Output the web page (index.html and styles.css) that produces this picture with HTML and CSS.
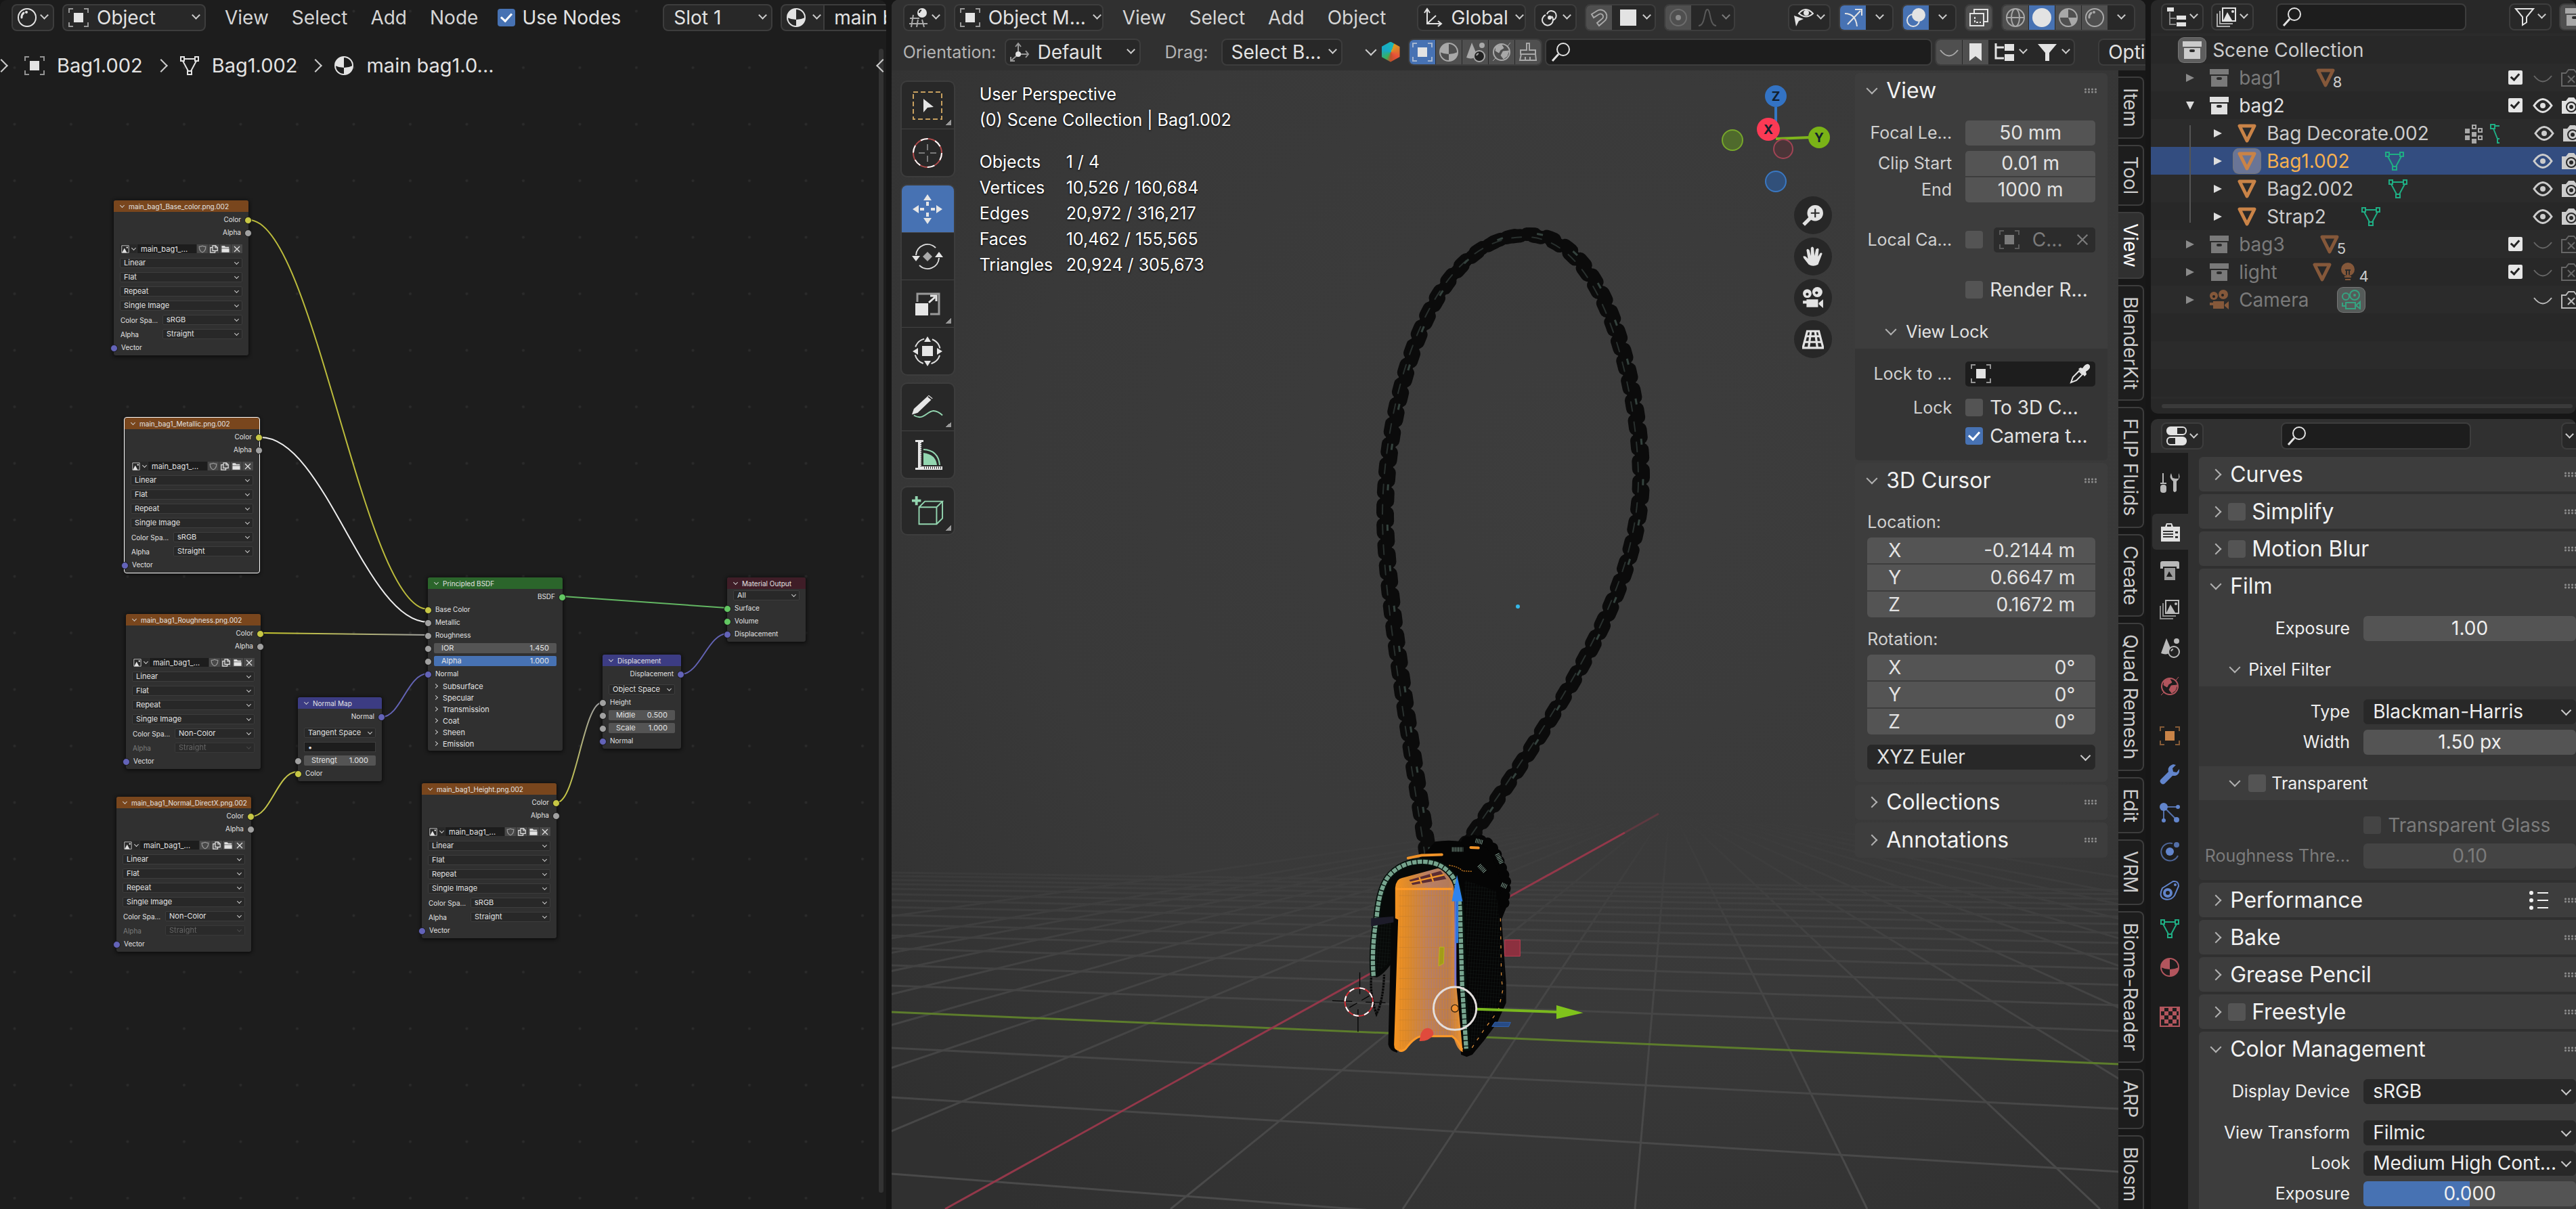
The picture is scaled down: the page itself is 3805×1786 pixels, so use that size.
FILE: index.html
```html
<!DOCTYPE html>
<html lang="en">
<head>
<meta charset="utf-8">
<title>Shading workspace</title>
<link rel="stylesheet" href="styles.css">
</head>
<body>
<svg class="sprite" aria-hidden="true">
  <symbol id="i-object" viewBox="0 0 30 30"><path d="M8 8h14v14H8z" fill="currentColor"/><path d="M1 8V2h6M23 2h6v6M29 22v6h-6M7 28H1v-6" fill="none" stroke="currentColor" stroke-width="2" opacity=".6"/></symbol>
  <symbol id="i-material" viewBox="0 0 30 30"><circle cx="15" cy="15" r="13" fill="none" stroke="currentColor" stroke-width="2"/><path d="M15 2a13 13 0 0 0-13 13q6 3 13 3zM15 18q7 0 13-3a13 13 0 0 1-13 13z" fill="currentColor"/></symbol>
  <symbol id="i-mesh" viewBox="0 0 30 30"><path d="M7 5h16M5 8l8 15M25 8l-8 15M2 2h5v6H2zM23 2h5v6h-5zM12 23h6v5h-6z" fill="none" stroke="currentColor" stroke-width="2"/></symbol>
  <symbol id="i-tri" viewBox="0 0 30 30"><path d="M4 4h22L15 26z" fill="none" stroke="currentColor" stroke-width="5" stroke-linejoin="round"/></symbol>
  <symbol id="i-sphere" viewBox="0 0 30 30"><circle cx="15" cy="15" r="13" fill="none" stroke="currentColor" stroke-width="2"/><path d="M7 15a8 8 0 0 1 3-7" fill="none" stroke="currentColor" stroke-width="3" stroke-linecap="round"/><circle cx="14" cy="7" r="2" fill="currentColor"/></symbol>
  <symbol id="i-view3d" viewBox="0 0 30 30"><path d="M7 11L4 29M2 16h14M1 24h27M14 18l-2 11M20 18l3 11" fill="none" stroke="currentColor" stroke-width="2" opacity=".7"/><circle cx="20" cy="8" r="7" fill="currentColor"/><path d="M16 8a4 4 0 0 1 3-4" stroke="#222" stroke-width="2" fill="none"/></symbol>
  <symbol id="i-axes" viewBox="0 0 30 30"><path d="M7 4v20h20M7 24l13-12M3 8l4-6 4 6M23 20l5 4-5 4" fill="none" stroke="currentColor" stroke-width="2"/></symbol>
  <symbol id="i-orient" viewBox="0 0 30 30"><path d="M13 16V3M16 18h12M11 20l-9 8M9 7l4-5 4 5M24 13l4 5-4 5M2 22v6h6" fill="none" stroke="currentColor" stroke-width="2" opacity=".6"/><circle cx="13" cy="18" r="4" fill="currentColor"/></symbol>
  <symbol id="i-pivot" viewBox="0 0 30 30"><path d="M11 10a7 7 0 1 1 8 9M18 13a8 8 0 1 1-9-2" fill="none" stroke="currentColor" stroke-width="2"/><circle cx="15" cy="15" r="3" fill="currentColor"/></symbol>
  <symbol id="i-magnet" viewBox="0 0 30 30"><path d="M4 10l8-5a9 9 0 1 1 10 16l-7 6-3-4 7-6a4 4 0 0 0-4-7l-8 5z" fill="none" stroke="currentColor" stroke-width="2"/></symbol>
  <symbol id="i-square" viewBox="0 0 30 30"><path d="M3 3h24v24H3z" fill="currentColor"/></symbol>
  <symbol id="i-prop" viewBox="0 0 30 30"><circle cx="15" cy="15" r="12" fill="none" stroke="currentColor" stroke-width="2" opacity=".5"/><circle cx="15" cy="15" r="4" fill="currentColor"/></symbol>
  <symbol id="i-falloff" viewBox="0 0 30 30"><path d="M2 27C12 27 10 3 15 3s3 24 13 24" fill="none" stroke="currentColor" stroke-width="2"/></symbol>
  <symbol id="i-eyecursor" viewBox="0 0 30 30"><path d="M8 9Q18-3 29 9 19 18 8 9z" fill="none" stroke="currentColor" stroke-width="2"/><circle cx="19" cy="8" r="4" fill="currentColor"/><path d="M1 12l14 5-7 3-4 8z" fill="currentColor"/></symbol>
  <symbol id="i-gizmo" viewBox="0 0 30 30"><path d="M3 9q16 0 18 19M7 25L26 5M18 3h10v9" fill="none" stroke="currentColor" stroke-width="2"/></symbol>
  <symbol id="i-overlay" viewBox="0 0 30 30"><circle cx="19" cy="11" r="10" fill="currentColor"/><circle cx="11" cy="19" r="9" fill="none" stroke="currentColor" stroke-width="2"/></symbol>
  <symbol id="i-xray" viewBox="0 0 30 30"><path d="M2 9h20v18H2zM8 9V3h20v18h-6" fill="none" stroke="currentColor" stroke-width="2"/><path d="M9 14v8h9" fill="none" stroke="currentColor" stroke-width="2" stroke-dasharray="3 2"/></symbol>
  <symbol id="i-wire" viewBox="0 0 30 30"><circle cx="15" cy="15" r="13" fill="none" stroke="currentColor" stroke-width="2"/><ellipse cx="15" cy="15" rx="6" ry="13" fill="none" stroke="currentColor" stroke-width="2"/><path d="M2 15h26" stroke="currentColor" stroke-width="2"/></symbol>
  <symbol id="i-solid" viewBox="0 0 30 30"><circle cx="15" cy="15" r="14" fill="currentColor"/></symbol>
  <symbol id="i-matprev" viewBox="0 0 30 30"><circle cx="15" cy="15" r="13" fill="none" stroke="currentColor" stroke-width="2"/><path d="M15 2v13H2A13 13 0 0 1 15 2zM15 15h13a13 13 0 0 1-8 12z" fill="currentColor"/></symbol>
  <symbol id="i-search" viewBox="0 0 30 30"><circle cx="18" cy="11" r="9" fill="none" stroke="currentColor" stroke-width="2"/><path d="M11 18L2 28" stroke="currentColor" stroke-width="3"/></symbol>
  <symbol id="i-closed" viewBox="0 0 30 30"><path d="M2 12q13 17 26 0" fill="none" stroke="currentColor" stroke-width="2"/></symbol>
  <symbol id="i-eye" viewBox="0 0 30 30"><path d="M2 15q13-19 26 0-13 19-26 0z" fill="none" stroke="currentColor" stroke-width="3"/><circle cx="15" cy="15" r="4" fill="currentColor"/></symbol>
  <symbol id="i-bookmark" viewBox="0 0 30 30"><path d="M6 2h18v26l-9-7-9 7z" fill="currentColor"/></symbol>
  <symbol id="i-tree" viewBox="0 0 30 30"><path d="M2 2v22h12M2 8h12" fill="none" stroke="currentColor" stroke-width="3"/><path d="M15 3h14v10H15zM15 18h14v10H15z" fill="currentColor"/></symbol>
  <symbol id="i-outliner" viewBox="0 0 30 30"><path d="M5 8v18h9M5 17h9" fill="none" stroke="currentColor" stroke-width="2" opacity=".5"/><path d="M1 1h10v6H1zM15 13h14v6H15zM15 23h14v6H15z" fill="currentColor"/></symbol>
  <symbol id="i-funnel" viewBox="0 0 30 30"><path d="M1 3h28L18 16v12h-6V16z" fill="currentColor"/></symbol>
  <symbol id="i-filter" viewBox="0 0 30 30"><path d="M2 3h26L18 15v8l-6 4V15z" fill="none" stroke="currentColor" stroke-width="2"/></symbol>
  <symbol id="i-scene" viewBox="0 0 30 30"><path d="M10 1l8 19q-7 7-16 3z" fill="currentColor"/><circle cx="25" cy="5" r="4" fill="currentColor"/><circle cx="21" cy="21" r="8" fill="#222" stroke="currentColor" stroke-width="2"/><path d="M17 20a4 4 0 0 1 3-3" stroke="currentColor" stroke-width="2" fill="none"/></symbol>
  <symbol id="i-world" viewBox="0 0 30 30"><circle cx="15" cy="15" r="12" fill="none" stroke="currentColor" stroke-width="2"/><path d="M7 6l8-2 3 5-5 3-2 4-5-3zM17 14l9-1-3 8-5 4-4-5zM2 28l5-5M24 6l4-5" fill="currentColor" stroke="currentColor" stroke-width="1"/></symbol>
  <symbol id="i-brush" viewBox="0 0 30 30"><path d="M13 2h4v10h9v6H4v-6h9zM5 18l-2 9h24l-1-9M11 22v5M18 22v5" fill="none" stroke="currentColor" stroke-width="2"/></symbol>
  <symbol id="i-dropper" viewBox="0 0 30 30"><path d="M2 28l3-8 9-9 5 5-9 9z" fill="none" stroke="currentColor" stroke-width="2"/><path d="M13 8l3-2 3 1q6-9 10-5t-5 10l1 4-3 3z" fill="currentColor"/></symbol>
  <symbol id="i-coll" viewBox="0 0 30 30"><path d="M1 2h28v8H1zM3 12h24v16H3z" fill="currentColor"/><rect x="11" y="14" width="8" height="4" rx="2" fill="#2b2b2b"/></symbol>
  <symbol id="i-cam" viewBox="0 0 30 30"><path d="M1 8h6l4-5h8l4 5h6v19H1z" fill="currentColor"/><circle cx="15" cy="17" r="7" fill="none" stroke="#282828" stroke-width="2"/><circle cx="15" cy="17" r="3" fill="#282828"/></symbol>
  <symbol id="i-camx" viewBox="0 0 30 30"><path d="M1 8h6l4-5h8l4 5h6v19H1zM10 12l10 10M20 12L10 22" fill="none" stroke="currentColor" stroke-width="2"/></symbol>
  <symbol id="i-movie" viewBox="0 0 30 30"><circle cx="7" cy="9" r="6" fill="currentColor"/><circle cx="21" cy="7" r="7" fill="currentColor"/><circle cx="7" cy="10" r="2" fill="#222"/><circle cx="20" cy="8" r="2" fill="#222"/><path d="M6 17h16v11H6zM1 19h5v4H1zM23 22l6-5v12l-6-5z" fill="currentColor"/></symbol>
  <symbol id="i-movieline" viewBox="0 0 30 30"><circle cx="7" cy="10" r="5" fill="none" stroke="currentColor" stroke-width="2"/><circle cx="20" cy="8" r="7" fill="none" stroke="currentColor" stroke-width="2"/><circle cx="20" cy="8" r="2" fill="currentColor"/><path d="M7 19h14v9H7zM2 19v5h5M22 23l6-5v10l-6-5z" fill="none" stroke="currentColor" stroke-width="2"/></symbol>
  <symbol id="i-bulb" viewBox="0 0 30 30"><circle cx="15" cy="11" r="10" fill="currentColor"/><path d="M10 22h10M11 26h8" stroke="currentColor" stroke-width="2"/><path d="M11 12h8M13 12v7M17 12v7" stroke="#2b2b2b" stroke-width="2"/></symbol>
  <symbol id="i-image" viewBox="0 0 30 30"><path d="M2 2h26v26H2z" fill="none" stroke="currentColor" stroke-width="2"/><path d="M3 28l9-17 9 17z" fill="currentColor"/><circle cx="22" cy="9" r="3" fill="currentColor"/></symbol>
  <symbol id="i-layers" viewBox="0 0 30 30"><path d="M9 2h19v19H9z" fill="none" stroke="currentColor" stroke-width="2"/><path d="M5 6v19h19M1 10v19h19" fill="none" stroke="currentColor" stroke-width="2" opacity=".7"/><path d="M10 20l6-12 7 12z" fill="currentColor"/><circle cx="24" cy="7" r="2" fill="currentColor"/></symbol>
  <symbol id="i-shield" viewBox="0 0 30 30"><path d="M15 3q6 3 12 3 0 16-12 21Q3 22 3 6q6 0 12-3z" fill="none" stroke="#999" stroke-width="3"/></symbol>
  <symbol id="i-copy" viewBox="0 0 30 30"><path d="M10 2h11l7 7v12H10zM9 9H2v19h17v-6M20 3v7h7" fill="none" stroke="currentColor" stroke-width="3"/></symbol>
  <symbol id="i-folder" viewBox="0 0 30 30"><path d="M1 3h11l3 4h13v4H1zM1 13h28v14H1z" fill="currentColor"/></symbol>
  <symbol id="i-x" viewBox="0 0 30 30"><path d="M5 5l20 20M25 5L5 25" stroke="currentColor" stroke-width="3"/></symbol>
  <symbol id="i-tools" viewBox="0 0 30 30"><path d="M5 1v15M1 16h9" stroke="currentColor" stroke-width="2"/><rect x="1" y="18" width="9" height="12" rx="4" fill="currentColor"/><path d="M17 1q-4 7 3 12v14q2 4 5 0V13q7-5 3-12v8h-5l-4-1z" fill="currentColor"/></symbol>
  <symbol id="i-render" viewBox="0 0 30 30"><path d="M1 7h6l2-5h8l2 5h10v22H1z" fill="currentColor"/><path d="M4 14h15M4 18h15M4 22h15" stroke="#303030" stroke-width="2"/><path d="M22 14h4v3h-4zM22 21h4v3h-4zM10 4h6v3h-6z" fill="#303030"/></symbol>
  <symbol id="i-output" viewBox="0 0 30 30"><path d="M1 12V4q0-3 3-3h22q3 0 3 3v8h-4V9H5v3z" fill="currentColor"/><path d="M7 11h16v18H7z" fill="currentColor" opacity=".8"/><path d="M10 24l4-8 5 8z" fill="#1d1d1d"/></symbol>
  <symbol id="i-wrench" viewBox="0 0 30 30"><path d="M29 7q1 8-6 10l-4 0L8 28q-3 3-6 0t0-6L13 11q-2-8 7-11l4 1-5 5 1 5 5 1z" fill="currentColor"/></symbol>
  <symbol id="i-particles" viewBox="0 0 30 30"><path d="M6 6h20M6 6v20M8 8l17 17" stroke="currentColor" stroke-width="2" opacity=".8"/><circle cx="6" cy="6" r="6" fill="currentColor"/><circle cx="27" cy="6" r="3" fill="currentColor"/><circle cx="6" cy="26" r="3" fill="currentColor"/><circle cx="25" cy="25" r="4" fill="currentColor"/></symbol>
  <symbol id="i-physics" viewBox="0 0 30 30"><path d="M19 3A13 13 0 1 0 27 21" fill="none" stroke="currentColor" stroke-width="2" opacity=".7"/><circle cx="15" cy="15" r="6" fill="currentColor"/><circle cx="25" cy="5" r="4" fill="currentColor" opacity=".8"/></symbol>
  <symbol id="i-constraint" viewBox="0 0 30 30"><path d="M4 12L20 2q8-1 8 7l-6 14q-6 8-15 5T4 12z" fill="none" stroke="currentColor" stroke-width="2"/><circle cx="12" cy="19" r="5" fill="none" stroke="currentColor" stroke-width="4"/><circle cx="23" cy="7" r="2" fill="currentColor"/></symbol>
  <symbol id="i-texture" viewBox="0 0 30 30"><path d="M1 1h28v28H1z" fill="none" stroke="currentColor" stroke-width="2"/><path d="M1 1h6v6H1zM13 1h6v6h-6zM7 7h6v6H7zM19 7h6v6h-6zM1 13h6v6H1zM13 13h6v6h-6zM25 13h4v6h-4zM7 19h6v6H7zM19 19h6v6h-6zM25 1h4v6h-4zM13 25h6v4h-6z" fill="currentColor"/></symbol>
  <symbol id="i-list" viewBox="0 0 30 30"><circle cx="4" cy="4" r="3" fill="currentColor"/><circle cx="4" cy="15" r="3" fill="currentColor"/><circle cx="4" cy="26" r="3" fill="currentColor"/><path d="M13 4h16M13 15h16M13 26h16" stroke="currentColor" stroke-width="2"/></symbol>
  <symbol id="i-dots" viewBox="0 0 30 30"><path d="M2 8h7v7H2zM2 18h7v7H2zM12 13h7v7h-7zM12 23h7v7h-7z" fill="currentColor"/><path d="M13 3h5v5h-5zM22 8h5v5h-5zM22 19h5v5h-5z" fill="none" stroke="currentColor" stroke-width="2"/></symbol>
  <symbol id="i-curve" viewBox="0 0 16 30"><path d="M2 2h6v6H2zM8 4h7M6 8l6 15M15 23h-3v6h3" fill="none" stroke="currentColor" stroke-width="2"/></symbol>
  <symbol id="i-props" viewBox="0 0 30 30"><rect x="1" y="2" width="28" height="11" rx="5" fill="none" stroke="currentColor" stroke-width="2"/><rect x="1" y="17" width="28" height="11" rx="5" fill="none" stroke="currentColor" stroke-width="2"/><path d="M16 2H6a5 5 0 0 0 0 11h10zM13 17h11a5 5 0 0 1 0 11H13z" fill="currentColor"/></symbol>
  <symbol id="i-hand" viewBox="0 0 30 30"><path d="M9 26L2 17q-2-4 3-2l3 3L6 6q1-3 4 0l2 8 0-11q2-3 4 0l1 11 2-9q3-3 4 0l-1 10 3-5q4-1 2 3l-5 13q-7 4-13 0z" fill="currentColor"/></symbol>
  <symbol id="i-zoom" viewBox="0 0 30 30"><circle cx="18" cy="12" r="11" fill="currentColor"/><path d="M11 19L2 28" stroke="currentColor" stroke-width="5"/><path d="M12 12h12M18 6v12" stroke="#282828" stroke-width="2"/></symbol>
  <symbol id="i-grid" viewBox="0 0 30 30"><path d="M7 4h16l6 23H1zM5 11h20M3 19h24M12 4l-3 23M18 4l3 23" fill="none" stroke="currentColor" stroke-width="3"/></symbol>
</svg>

<main class="workspace">
  <section class="editor nodes" aria-label="Shader editor">
    <header class="bar">
      <button class="box ed" aria-label="Editor type"><svg class="ic"><use href="#i-sphere"/></svg><i class="dn"></i></button>
      <button class="box obj"><svg class="ic"><use href="#i-object"/></svg><span>Object</span><i class="dn"></i></button>
      <nav class="menu"><button>View</button><button>Select</button><button>Add</button><button>Node</button></nav>
      <label class="chk"><input type="checkbox" checked>Use Nodes</label>
      <button class="box slot"><span>Slot 1</span><i class="dn"></i></button>
      <div class="box mat"><button class="ed" aria-label="Browse material"><svg class="ic"><use href="#i-material"/></svg><i class="dn"></i></button><input aria-label="Material name" value="main bag1.002"></div>
    </header>
    <nav class="crumbs" aria-label="Context path">
      <i class="rt edge"></i>
      <svg class="ic"><use href="#i-object"/></svg><span>Bag1.002</span><i class="rt"></i>
      <svg class="ic"><use href="#i-mesh"/></svg><span>Bag1.002</span><i class="rt"></i>
      <svg class="ic"><use href="#i-material"/></svg><span>main bag1.0...</span>
      <i class="rt lt"></i>
    </nav>
    <div class="scrollbar"></div>
    <svg class="canvas" aria-hidden="true">
      <defs>
        <pattern id="dots" x="-20" y="-25" width="83.500" height="83.500" patternUnits="userSpaceOnUse"><circle cx="41.500" cy="41.500" r="2" fill="#2b2b2b"/></pattern>
        <linearGradient id="yg" gradientUnits="userSpaceOnUse" x1="386" x2="632" y1="0" y2="0"><stop offset="0" stop-color="#c7c729"/><stop offset="1" stop-color="#a1a1a1"/></linearGradient>
        <linearGradient id="yg2" gradientUnits="userSpaceOnUse" x1="0" x2="0" y1="1185" y2="1038"><stop offset="0" stop-color="#c7c740"/><stop offset="1" stop-color="#a1a1a1"/></linearGradient>
      </defs>
      <rect width="100%" height="100%" fill="url(#dots)"/>
      <g fill="none" stroke-width="2">
        <path d="M368 325C463 325 537 900 632 900" stroke="#bcbc3c"/>
        <path d="M385 646C480 646 540 919 632 919" stroke="#eee"/>
        <path d="M386 935L632 938" stroke="url(#yg)"/>
        <path d="M372 1206C400 1206 410 1140 439 1140" stroke="#c4c44a"/>
        <path d="M564 1059C592 1059 602 995 632 995" stroke="#6363b4"/>
        <path d="M832 881L1073 898" stroke="#63b763"/>
        <path d="M1006 996C1034 996 1046 936 1074 936" stroke="#6363b4"/>
        <path d="M823 1185C850 1185 862 1038 889 1038" stroke="url(#yg2)"/>
      </g>
    </svg>

    <article class="node n-base">
      <h3 class="h-tex"><i class="dn"></i>main_bag1_Base_color.png.002</h3>
      <p class="out y">Color</p><p class="out g last">Alpha</p>
      <div class="f idb"><button aria-label="Browse image"><svg><use href="#i-image"/></svg><i class="dn"></i></button><input aria-label="Image" value="main_bag1_..."><button aria-label="Fake user"><svg><use href="#i-shield"/></svg></button><button aria-label="New image"><svg><use href="#i-copy"/></svg></button><button aria-label="Open image"><svg><use href="#i-folder"/></svg></button><button aria-label="Unlink"><svg><use href="#i-x"/></svg></button></div>
      <div class="f"><span class="sel"><select aria-label="Interpolation"><option>Linear</option></select></span></div>
      <div class="f"><span class="sel"><select aria-label="Projection"><option>Flat</option></select></span></div>
      <div class="f"><span class="sel"><select aria-label="Extension"><option>Repeat</option></select></span></div>
      <div class="f"><span class="sel"><select aria-label="Source"><option>Single Image</option></select></span></div>
      <label class="f two">Color Spa...<span class="sel"><select><option>sRGB</option></select></span></label>
      <label class="f two">Alpha<span class="sel"><select><option>Straight</option></select></span></label>
      <p class="in p">Vector</p>
    </article>
    <article class="node n-metal active">
      <h3 class="h-tex"><i class="dn"></i>main_bag1_Metallic.png.002</h3>
      <p class="out y">Color</p><p class="out g last">Alpha</p>
      <div class="f idb"><button aria-label="Browse image"><svg><use href="#i-image"/></svg><i class="dn"></i></button><input aria-label="Image" value="main_bag1_..."><button aria-label="Fake user"><svg><use href="#i-shield"/></svg></button><button aria-label="New image"><svg><use href="#i-copy"/></svg></button><button aria-label="Open image"><svg><use href="#i-folder"/></svg></button><button aria-label="Unlink"><svg><use href="#i-x"/></svg></button></div>
      <div class="f"><span class="sel"><select aria-label="Interpolation"><option>Linear</option></select></span></div>
      <div class="f"><span class="sel"><select aria-label="Projection"><option>Flat</option></select></span></div>
      <div class="f"><span class="sel"><select aria-label="Extension"><option>Repeat</option></select></span></div>
      <div class="f"><span class="sel"><select aria-label="Source"><option>Single Image</option></select></span></div>
      <label class="f two">Color Spa...<span class="sel"><select><option>sRGB</option></select></span></label>
      <label class="f two">Alpha<span class="sel"><select><option>Straight</option></select></span></label>
      <p class="in p">Vector</p>
    </article>
    <article class="node n-rough">
      <h3 class="h-tex"><i class="dn"></i>main_bag1_Roughness.png.002</h3>
      <p class="out y">Color</p><p class="out g last">Alpha</p>
      <div class="f idb"><button aria-label="Browse image"><svg><use href="#i-image"/></svg><i class="dn"></i></button><input aria-label="Image" value="main_bag1_..."><button aria-label="Fake user"><svg><use href="#i-shield"/></svg></button><button aria-label="New image"><svg><use href="#i-copy"/></svg></button><button aria-label="Open image"><svg><use href="#i-folder"/></svg></button><button aria-label="Unlink"><svg><use href="#i-x"/></svg></button></div>
      <div class="f"><span class="sel"><select aria-label="Interpolation"><option>Linear</option></select></span></div>
      <div class="f"><span class="sel"><select aria-label="Projection"><option>Flat</option></select></span></div>
      <div class="f"><span class="sel"><select aria-label="Extension"><option>Repeat</option></select></span></div>
      <div class="f"><span class="sel"><select aria-label="Source"><option>Single Image</option></select></span></div>
      <label class="f two">Color Spa...<span class="sel"><select><option>Non-Color</option></select></span></label>
      <label class="f two off">Alpha<span class="sel"><select disabled><option>Straight</option></select></span></label>
      <p class="in p">Vector</p>
    </article>
    <article class="node n-norm">
      <h3 class="h-tex"><i class="dn"></i>main_bag1_Normal_DirectX.png.002</h3>
      <p class="out y">Color</p><p class="out g last">Alpha</p>
      <div class="f idb"><button aria-label="Browse image"><svg><use href="#i-image"/></svg><i class="dn"></i></button><input aria-label="Image" value="main_bag1_..."><button aria-label="Fake user"><svg><use href="#i-shield"/></svg></button><button aria-label="New image"><svg><use href="#i-copy"/></svg></button><button aria-label="Open image"><svg><use href="#i-folder"/></svg></button><button aria-label="Unlink"><svg><use href="#i-x"/></svg></button></div>
      <div class="f"><span class="sel"><select aria-label="Interpolation"><option>Linear</option></select></span></div>
      <div class="f"><span class="sel"><select aria-label="Projection"><option>Flat</option></select></span></div>
      <div class="f"><span class="sel"><select aria-label="Extension"><option>Repeat</option></select></span></div>
      <div class="f"><span class="sel"><select aria-label="Source"><option>Single Image</option></select></span></div>
      <label class="f two">Color Spa...<span class="sel"><select><option>Non-Color</option></select></span></label>
      <label class="f two off">Alpha<span class="sel"><select disabled><option>Straight</option></select></span></label>
      <p class="in p">Vector</p>
    </article>
    <article class="node n-height">
      <h3 class="h-tex"><i class="dn"></i>main_bag1_Height.png.002</h3>
      <p class="out y">Color</p><p class="out g last">Alpha</p>
      <div class="f idb"><button aria-label="Browse image"><svg><use href="#i-image"/></svg><i class="dn"></i></button><input aria-label="Image" value="main_bag1_..."><button aria-label="Fake user"><svg><use href="#i-shield"/></svg></button><button aria-label="New image"><svg><use href="#i-copy"/></svg></button><button aria-label="Open image"><svg><use href="#i-folder"/></svg></button><button aria-label="Unlink"><svg><use href="#i-x"/></svg></button></div>
      <div class="f"><span class="sel"><select aria-label="Interpolation"><option>Linear</option></select></span></div>
      <div class="f"><span class="sel"><select aria-label="Projection"><option>Flat</option></select></span></div>
      <div class="f"><span class="sel"><select aria-label="Extension"><option>Repeat</option></select></span></div>
      <div class="f"><span class="sel"><select aria-label="Source"><option>Single Image</option></select></span></div>
      <label class="f two">Color Spa...<span class="sel"><select><option>sRGB</option></select></span></label>
      <label class="f two">Alpha<span class="sel"><select><option>Straight</option></select></span></label>
      <p class="in p">Vector</p>
    </article>
    <article class="node n-nmap">
      <h3 class="h-vec"><i class="dn"></i>Normal Map</h3>
      <p class="out p last">Normal</p>
      <div class="f"><span class="sel"><select aria-label="Space"><option>Tangent Space</option></select></span></div>
      <div class="f"><input class="uv" aria-label="UV map" value="•"></div>
      <div class="in g"><label class="val"><span>Strengt</span><input value="1.000"></label></div>
      <p class="in y">Color</p>
    </article>
    <article class="node n-bsdf">
      <h3 class="h-shd"><i class="dn"></i>Principled BSDF</h3>
      <p class="out s">BSDF</p>
      <p class="in y">Base Color</p><p class="in g">Metallic</p><p class="in g">Roughness</p>
      <div class="in g"><label class="val"><span>IOR</span><input value="1.450"></label></div>
      <div class="in g"><label class="val full"><span>Alpha</span><input value="1.000"></label></div>
      <p class="in p">Normal</p>
      <button class="sub"><i class="rt"></i>Subsurface</button><button class="sub"><i class="rt"></i>Specular</button><button class="sub"><i class="rt"></i>Transmission</button><button class="sub"><i class="rt"></i>Coat</button><button class="sub"><i class="rt"></i>Sheen</button><button class="sub"><i class="rt"></i>Emission</button>
    </article>
    <article class="node n-disp">
      <h3 class="h-vec"><i class="dn"></i>Displacement</h3>
      <p class="out p last">Displacement</p>
      <div class="f low"><span class="sel"><select aria-label="Space"><option>Object Space</option></select></span></div>
      <p class="in g">Height</p>
      <div class="in g"><label class="val"><span>Midle</span><input value="0.500"></label></div>
      <div class="in g"><label class="val"><span>Scale</span><input value="1.000"></label></div>
      <p class="in p">Normal</p>
    </article>
    <article class="node n-out">
      <h3 class="h-out"><i class="dn"></i>Material Output</h3>
      <div class="f low"><span class="sel"><select aria-label="Target"><option>All</option></select></span></div>
      <p class="in s">Surface</p><p class="in s">Volume</p><p class="in p">Displacement</p>
    </article>
  </section>

  <section class="editor view3d" aria-label="3D viewport">
    <svg class="scene" viewBox="1317 0 1853 1786" preserveAspectRatio="xMinYMin slice" aria-hidden="true">
      <defs>
        <radialGradient id="bg" cx=".55" cy=".4" r=".75"><stop offset="0" stop-color="#3d3d3d"/><stop offset=".6" stop-color="#393939"/><stop offset="1" stop-color="#303030"/></radialGradient>
        <linearGradient id="fade" x1="0" x2="0" y1="1200" y2="1786" gradientUnits="userSpaceOnUse"><stop offset="0" stop-color="#000"/><stop offset=".4" stop-color="#999"/><stop offset="1" stop-color="#eee"/></linearGradient>
        <mask id="floor" maskUnits="userSpaceOnUse" x="1317" y="1190" width="1853" height="600"><rect x="1317" y="1190" width="1853" height="600" fill="url(#fade)"/></mask>
        <linearGradient id="org" x1="480" x2="780" y1="0" y2="0" gradientUnits="userSpaceOnUse"><stop offset="0" stop-color="#f59320"/><stop offset=".2" stop-color="#dd8a2c"/><stop offset=".5" stop-color="#b87f66"/><stop offset=".8" stop-color="#b47a58"/><stop offset="1" stop-color="#f0942a"/></linearGradient>
        <pattern id="mesh" width="12" height="46" patternUnits="userSpaceOnUse"><path d="M1 0v46" stroke="#d98420" stroke-width="3" opacity=".8"/><path d="M0 1h12" stroke="#c87c28" stroke-width="3" opacity=".7"/></pattern>
        <pattern id="dark" width="12" height="16" patternUnits="userSpaceOnUse" patternTransform="rotate(4)"><path d="M0 0v16M0 0h12" stroke="#1a201e" stroke-width="2"/></pattern>
        <path id="strap" d="M2109 1262C2090 1130 2046 880 2046 760C2046 600 2110 347 2257 347C2380 347 2424 600 2424 704C2424 850 2340 1000 2162 1252"/>
      </defs>
      <rect x="1317" width="1853" height="1786" fill="url(#bg)"/>
      <g mask="url(#floor)" stroke="#4d4d4d" stroke-width="3" fill="none">
        <path d="M2467 1189L2758 1786M2467 1189L3102 1786M2467 1189L3445 1786M2467 1189L3788 1786M2467 1189L4131 1786M2467 1189L4475 1786M2467 1189L4818 1786M2467 1189L5161 1786M2467 1189L5505 1786M2467 1189L6190 1786M2467 1189L2415 1786M2467 1189L2072 1786M2467 1189L1729 1786M2467 1189L1042 1786M2467 1189L699 1786M2467 1189L355 1786M2467 1189L12 1786M2467 1189L-331 1786M2467 1189L-675 1786M2467 1189L-1018 1786M2467 1189L-1704 1786"/>
        <path d="M1317 1734L3130 1872M1317 1621L3130 1731M1317 1548L3130 1638M1317 1456L3130 1523M1317 1426L3130 1485M1317 1401L3130 1455M1317 1382L3130 1431M1317 1366L3130 1410M1317 1352L3130 1393M1317 1340L3130 1378M1317 1330L3130 1365M1317 1321L3130 1354M1317 1313L3130 1344M1317 1306L3130 1336M1317 1300L3130 1328M1317 1294L3130 1321M1317 1289L3130 1315"/>
      </g>
      <path d="M1317 1495L3130 1572" stroke="#5d7d2c" stroke-width="3"/>
      <path d="M1396 1786L2225 1327L2400 1230" stroke="#93384a" stroke-width="3" fill="none"/>
      <path d="M2400 1230L2450 1202" stroke="#93384a" stroke-width="3" opacity=".4"/>
      <g fill="none" stroke-linecap="round" stroke="#0b0b0b">
        <use href="#strap" stroke-width="16"/>
        <use href="#strap" stroke-width="20" stroke-dasharray="12 18" transform="translate(-3 1)"/>
        <use href="#strap" stroke-width="20" stroke-dasharray="12 18" stroke-dashoffset="15" transform="translate(3 -1)"/>
        <use href="#strap" stroke-width="2" stroke="#29302e" stroke-dasharray="14 16" transform="translate(-4 3)"/>
        <use href="#strap" stroke-width="3" stroke="#34423d" stroke-linecap="butt" stroke-dasharray="9 51" transform="translate(3 -2)"/>
      </g>
      <g transform="translate(1900 1200) scale(.333)">
        <path d="M378 720q-10 80 22 175 30-60 34-175" fill="none" stroke="#0a0a0a" stroke-width="10" stroke-dasharray="10 3"/>
        <path d="M600 200l60-70q60-10 120 0 90-40 150 25 40 60 55 130l-10 140-20 50 20 280v90l-40 90-60 80-50 60-25 10-25-10-30-400z" fill="#050505"/>
        <path d="M790 300l140 50 25 200 15 260-150 240z" fill="url(#dark)"/>
        <path d="M800 130q90-30 130 50 30 70 45 130l-10 110" fill="none" stroke="#050505" stroke-width="46" stroke-linecap="round" stroke-dasharray="2 30"/>
        <path d="M840 125l30 8M735 165h50M935 185l20 40M855 235l28 30M955 320l22 10" stroke="#7f9c8e" stroke-width="20" stroke-dasharray="3 4"/>
        <path d="M540 203l60-12 90-3M818 156l34 2" stroke="#ef9228" stroke-width="12" stroke-linecap="round"/>
        <path d="M722 235q40 5 60 25l40 2" stroke="#d07f20" stroke-width="4" stroke-dasharray="6 4" fill="none"/>
        <path d="M950 470l4 260 6 60-20 90-60 80-60 90" stroke="#d58a3a" stroke-width="4" stroke-dasharray="14 26" fill="none"/>
        <path d="M385 730q-8-130 12-230 10-140 60-210 60-80 150-80 90 0 140 80l20 100-260 80-20 170q-50 80-85 92z" fill="#070908"/>
        <path d="M400 700q-4-120 12-220l75-10-20 180q-30 40-67 55z" fill="url(#dark)"/>
        <path d="M466 470l-14 560q6 30 40 36l10-600z" fill="#060606"/>
        <path d="M483 335q4-40 30-44l175-47q50 40 55 80l12 450 28 290q-26-10-42-70-10-5-130-2-46 10-95 66-40 6-38-30l18-552-13-6z" fill="url(#org)"/>
        <path d="M500 330h235l12 440 20 220-30 5-130-2-46 10-60 50z" fill="url(#mesh)"/>
        <path d="M545 300l140-40 25 36-150 26z" fill="#5a2c33"/><path d="M550 311l150-34M590 288l10 30M640 272l12 36" stroke="#ef962c" stroke-width="7"/>
        <path d="M486 340h250M500 1056q14 8 30-8 40-55 75-55h130q30 20 45 60" fill="none" stroke="#ff9a28" stroke-width="9"/>
        <path d="M387 728q-10-120 14-260 12-140 60-190 56-60 140-60 100 0 145 80 30 60 30 190l8 280 18 290" fill="none" stroke="#06100c" stroke-width="30"/>
        <path d="M387 726q-10-120 14-260 12-140 60-190 56-57 140-57 100 0 145 80 26 60 26 190l8 280 18 280" fill="none" stroke="#76a48e" stroke-width="19" stroke-dasharray="20 4"/>
        <path d="M376 470l100-8v26l-100 18z" fill="#1d1c2a"/>
        <path d="M750 770V390" stroke="#7a76c8" stroke-width="9"/><path d="M757 580V390" stroke="#2c76dc" stroke-width="12"/><path d="M757 278l-23 117h48z" fill="#2d83ee"/>
        <path d="M680 598h20l-2 72-22 12z" fill="#a39c18" stroke="#b9b51e" stroke-width="3"/>
        <path d="M596 985q10-30 34-28 26 6 22 30-20 30-62 28z" fill="#e04a3c"/>
        <path d="M969 566h68v72h-68z" fill="#8c303f" stroke="#c03d52" stroke-width="3"/>
        <path d="M925 931l70 1-9 19-74-1z" fill="#274b85" stroke="#2f62b4" stroke-width="3"/>
        <path d="M845 873l360 13" stroke="#7ab81e" stroke-width="12"/><path d="M1198 856l119 34-119 27z" fill="#80c31c"/>
        <circle cx="748" cy="870" r="95" fill="none" stroke="#e3dedd" stroke-width="9"/>
        <circle cx="748" cy="870" r="16" fill="#f09030" stroke="#352412" stroke-width="4"/>
        <path d="M326 710v96M318 874v100M204 836l88 3M352 842l88 3M280 866l34-20M334 834l34-20" stroke="#050505" stroke-width="4"/>
        <circle cx="322" cy="841" r="62" fill="none" stroke="#d22f36" stroke-width="6"/><circle cx="322" cy="841" r="62" fill="none" stroke="#fff" stroke-width="6" stroke-dasharray="24 25"/>
      </g>
      <circle cx="2242" cy="896" r="3" fill="#35b8e8"/>
    </svg>
    <div class="heads">
      <header class="bar">
        <button class="box ed" aria-label="Editor type"><svg class="ic"><use href="#i-view3d"/></svg><i class="dn"></i></button>
        <button class="box mode"><svg class="ic"><use href="#i-object"/></svg><span>Object M...</span><i class="dn"></i></button>
        <nav class="menu"><button>View</button><button>Select</button><button>Add</button><button>Object</button></nav>
        <button class="box global"><svg class="ic"><use href="#i-axes"/></svg><span>Global</span><i class="dn"></i></button>
        <button class="box ed" aria-label="Pivot point"><svg class="ic"><use href="#i-pivot"/></svg><i class="dn"></i></button>
        <div class="box seg"><button class="on" aria-label="Snap"><svg class="ic dim"><use href="#i-magnet"/></svg></button><button class="wide" aria-label="Snap to"><svg class="ic"><use href="#i-square"/></svg><i class="dn"></i></button></div>
        <div class="box seg faint"><button class="on" aria-label="Proportional editing"><svg class="ic"><use href="#i-prop"/></svg></button><button class="wide" aria-label="Falloff"><svg class="ic"><use href="#i-falloff"/></svg><i class="dn"></i></button></div>
        <button class="box ed push" aria-label="Visibility"><svg class="ic"><use href="#i-eyecursor"/></svg><i class="dn"></i></button>
        <div class="box seg"><button class="blue" aria-label="Gizmos"><svg class="ic"><use href="#i-gizmo"/></svg></button><button aria-label="Gizmo options"><i class="dn"></i></button></div>
        <div class="box seg"><button class="blue" aria-label="Overlays"><svg class="ic"><use href="#i-overlay"/></svg></button><button aria-label="Overlay options"><i class="dn"></i></button></div>
        <div class="box seg"><button class="on" aria-label="X-ray"><svg class="ic"><use href="#i-xray"/></svg></button></div>
        <div class="box seg"><button class="on" aria-label="Wireframe"><svg class="ic dim"><use href="#i-wire"/></svg></button><button class="blue" aria-label="Solid"><svg class="ic"><use href="#i-solid"/></svg></button><button class="on" aria-label="Material preview"><svg class="ic dim"><use href="#i-matprev"/></svg></button><button class="on" aria-label="Rendered"><svg class="ic dim"><use href="#i-sphere"/></svg></button><button aria-label="Shading options"><i class="dn"></i></button></div>
      </header>
      <div class="bar tools">
        <span class="lab">Orientation:</span>
        <button class="box orient"><svg class="ic"><use href="#i-orient"/></svg><span>Default</span><i class="dn"></i></button>
        <span class="lab drag">Drag:</span>
        <button class="box dragbox"><span>Select B...</span><i class="dn"></i></button>
        <button class="gem" aria-label="Asset search"><i class="dn"></i><span></span></button>
        <div class="box seg"><button class="blue" aria-label="Objects"><svg class="ic"><use href="#i-object"/></svg></button><button class="on" aria-label="Materials"><svg class="ic dim"><use href="#i-material"/></svg></button><button class="on" aria-label="Scenes"><svg class="ic dim"><use href="#i-scene"/></svg></button><button class="on" aria-label="Worlds"><svg class="ic dim"><use href="#i-world"/></svg></button><button class="on" aria-label="Brushes"><svg class="ic dim"><use href="#i-brush"/></svg></button></div>
        <label class="search"><svg class="ic"><use href="#i-search"/></svg><input aria-label="Search assets"></label>
        <div class="box seg"><button class="on" aria-label="Hidden"><svg class="ic dim"><use href="#i-closed"/></svg></button><button class="on" aria-label="Bookmarks"><svg class="ic"><use href="#i-bookmark"/></svg></button><button class="wide" aria-label="Categories"><svg class="ic"><use href="#i-tree"/></svg><i class="dn"></i></button><button class="wide" aria-label="Filter"><svg class="ic"><use href="#i-funnel"/></svg><i class="dn"></i></button></div>
        <button class="box opts" aria-label="Options">Opti</button>
      </div>
    </div>
    <div class="stage">
      <div class="toolbar">
        <div class="tg"><button class="more" aria-label="Select box"><svg viewBox="0 0 46 46"><rect x="2" y="3" width="42" height="40" fill="none" stroke="#c8a05f" stroke-width="2" stroke-dasharray="7 4"/><path d="M17 13l15 12-9 1-6 7z" fill="#e6e6e6"/></svg></button><button aria-label="Cursor"><svg viewBox="0 0 46 46"><circle cx="23" cy="23" r="21" fill="none" stroke="#b04b4b" stroke-width="2"/><circle cx="23" cy="23" r="21" fill="none" stroke="#fff" stroke-width="2" stroke-dasharray="11 11"/><path d="M23 10v9M23 27v9M10 23h9M27 23h9" stroke="#ccc" stroke-width="1"/></svg></button></div>
        <div class="tg"><button class="blue" aria-label="Move"><svg viewBox="0 0 46 46"><path d="M23 1l6 9H17zM23 45l-6-9h12zM1 23l9-6v12zM45 23l-9 6V17z" fill="#e6e6e6"/><path d="M23 12v6M23 28v6M12 23h6M28 23h6" stroke="#e6e6e6" stroke-width="4"/></svg></button><button aria-label="Rotate"><svg viewBox="0 0 46 46"><path d="M6 21a17 17 0 0 1 29-11M40 25a17 17 0 0 1-29 11" fill="none" stroke="#ddd" stroke-width="2"/><path d="M0 22h12l-6 8zM34 24h12l-6-8z" fill="#e6e6e6"/><path d="M23 16l7 7-7 7-7-7z" fill="#aaa"/></svg></button><button class="more" aria-label="Scale"><svg viewBox="0 0 46 46"><path d="M8 20V8h32v30H27" fill="none" stroke="#999" stroke-width="3"/><path d="M5 22h19v18H5z" fill="#e6e6e6"/><path d="M25 21l9-8M27 11h9v8" stroke="#e6e6e6" stroke-width="3" fill="none"/></svg></button><button aria-label="Transform"><svg viewBox="0 0 46 46"><circle cx="23" cy="23" r="19" fill="none" stroke="#ddd" stroke-width="2" stroke-dasharray="18 12" stroke-dashoffset="-6"/><path d="M15 15h16v15H15zM23 1l5 8H18zM23 45l-5-8h10zM1 23l8-5v10zM45 23l-8 5V18z" fill="#e6e6e6"/></svg></button></div>
        <div class="tg"><button class="more" aria-label="Annotate"><svg viewBox="0 0 50 46"><path d="M1 34l3-9L27 4l6 5L10 31z" fill="#e6e6e6"/><path d="M26 6l6 5" stroke="#282828" stroke-width="2"/><path d="M4 35c20 12 22-20 44 0" fill="none" stroke="#93d6b0" stroke-width="2"/></svg></button><button aria-label="Measure"><svg viewBox="0 0 46 46"><path d="M5 1h12v3h-3v36h31v5H5v-3h4V4H5z" fill="#e6e6e6"/><path d="M17 38V20q18 2 20 18z" fill="#93d6b0"/><path d="M17 15q22 1 24 23" stroke="#93d6b0" stroke-width="2" fill="none"/><path d="M14 6v34M18 42h26" stroke="#282828" stroke-width="3" stroke-dasharray="1 2"/></svg></button></div>
        <div class="tg"><button class="more" aria-label="Add cube"><svg viewBox="0 0 50 46"><path d="M12 17h27v26H12zM12 17l9-9h27l-9 9M48 8v26l-9 9" fill="none" stroke="#93d6b0" stroke-width="2"/><path d="M8 0v14M1 7h14" stroke="#93d6b0" stroke-width="4"/></svg></button></div>
      </div>
      <div class="stats">
        <p>User Perspective</p><p>(0) Scene Collection | Bag1.002</p>
        <table>
          <tr><th>Objects</th><td>1 / 4</td></tr><tr><th>Vertices</th><td>10,526 / 160,684</td></tr><tr><th>Edges</th><td>20,972 / 316,217</td></tr><tr><th>Faces</th><td>10,462 / 155,565</td></tr><tr><th>Triangles</th><td>20,924 / 305,673</td></tr>
        </table>
      </div>
      <div class="nav">
        <svg class="gizmo" viewBox="2539 122 168 163">
          <path d="M2624 158v30" stroke="#3477c4" stroke-width="4"/><path d="M2624 205l50-2" stroke="#7fb51c" stroke-width="4"/>
          <circle cx="2560" cy="207" r="15" fill="#4f6a2c" stroke="#77a72b" stroke-width="2"/><circle cx="2635" cy="220" r="14" fill="#4b3538" stroke="#a24455" stroke-width="2"/><circle cx="2624" cy="268" r="15" fill="#31507a" stroke="#3a78c2" stroke-width="2"/>
          <circle cx="2624" cy="142" r="16" fill="#3373c4"/><circle cx="2688" cy="203" r="16" fill="#7ab317"/><circle cx="2613" cy="191" r="17" fill="#fb3a55"/>
          <g font-size="19" font-weight="700" text-anchor="middle" fill="#12202e"><text x="2624" y="149">Z</text><text x="2688" y="210">Y</text><text x="2613" y="198">X</text></g>
        </svg>
        <button aria-label="Zoom"><svg><use href="#i-zoom"/></svg></button><button aria-label="Pan"><svg><use href="#i-hand"/></svg></button><button aria-label="Camera view"><svg><use href="#i-movie"/></svg></button><button aria-label="Perspective"><svg><use href="#i-grid"/></svg></button>
      </div>
      <aside class="npanel">
        <section class="pn">
          <h2><i class="dn"></i>View<i class="grip"></i></h2>
          <div class="rows first">
            <label class="row"><span>Focal Le...</span><input class="num" value="50 mm"></label>
            <div class="pair"><label class="row"><span>Clip Start</span><input class="num" value="0.01 m"></label><label class="row"><span>End</span><input class="num" value="1000 m"></label></div>
            <div class="row gapped"><span>Local Ca...</span><div class="inl"><input type="checkbox" aria-label="Local camera"><div class="pick off"><svg class="ic"><use href="#i-object"/></svg><span>C...</span><svg class="ic sm"><use href="#i-x"/></svg></div></div></div>
            <div class="row gapped"><span></span><label class="chk"><input type="checkbox">Render R...</label></div>
          </div>
          <h3><i class="dn"></i>View Lock</h3>
          <div class="rows deep">
            <div class="row"><span>Lock to ...</span><div class="pick"><svg class="ic"><use href="#i-object"/></svg><svg class="ic"><use href="#i-dropper"/></svg></div></div>
            <div class="row lock"><span>Lock</span><label class="chk"><input type="checkbox">To 3D C...</label></div>
            <div class="row cam"><span></span><label class="chk"><input type="checkbox" checked>Camera t...</label></div>
          </div>
        </section>
        <section class="pn">
          <h2><i class="dn"></i>3D Cursor<i class="grip"></i></h2>
          <div class="rows vecs">
            <p>Location:</p>
            <div class="vec"><label><span>X</span><input value="-0.2144 m"></label><label><span>Y</span><input value="0.6647 m"></label><label><span>Z</span><input value="0.1672 m"></label></div>
            <p class="rot">Rotation:</p>
            <div class="vec"><label><span>X</span><input value="0°"></label><label><span>Y</span><input value="0°"></label><label><span>Z</span><input value="0°"></label></div>
            <span class="sel big euler"><select aria-label="Rotation mode"><option>XYZ Euler</option></select></span>
          </div>
        </section>
        <section class="pn"><h2><i class="rt"></i>Collections<i class="grip"></i></h2></section>
        <section class="pn"><h2><i class="rt"></i>Annotations<i class="grip"></i></h2></section>
      </aside>
      <nav class="tabs"><button>Item</button><button>Tool</button><button class="cur">View</button><button>BlenderKit</button><button>FLIP Fluids</button><button>Create</button><button>Quad Remesh</button><button>Edit</button><button>VRM</button><button>Biome-Reader</button><button>ARP</button><button>Blosm</button></nav>
    </div>
  </section>

  <div class="side">
    <section class="editor outliner" aria-label="Outliner">
      <header class="bar">
        <button class="box ed" aria-label="Editor type"><svg class="ic"><use href="#i-outliner"/></svg><i class="dn"></i></button>
        <button class="box ed" aria-label="Display mode"><svg class="ic"><use href="#i-layers"/></svg><i class="dn"></i></button>
        <label class="search"><svg class="ic"><use href="#i-search"/></svg><input aria-label="Filter"></label>
        <button class="box ed" aria-label="Filter options"><svg class="ic"><use href="#i-filter"/></svg><i class="dn"></i></button>
        <button class="box ed new lift" aria-label="New collection"><svg class="ic dim"><use href="#i-coll"/></svg></button>
      </header>
      <ul class="tree">
        <li class="root"><svg class="ic hl"><use href="#i-coll"/></svg><span>Scene Collection</span></li>
        <li class="mute"><i class="tw"></i><svg class="ic"><use href="#i-coll"/></svg><span>bag1</span><svg class="ic or g1"><use href="#i-tri"/></svg><b>8</b><span class="rs"><input type="checkbox" checked aria-label="Include bag1"><svg class="ic"><use href="#i-closed"/></svg><svg class="ic"><use href="#i-camx"/></svg></span></li>
        <li><i class="tw open"></i><svg class="ic"><use href="#i-coll"/></svg><span>bag2</span><span class="rs"><input type="checkbox" checked aria-label="Include bag2"><svg class="ic"><use href="#i-eye"/></svg><svg class="ic"><use href="#i-cam"/></svg></span></li>
        <li class="kid"><i class="tw"></i><svg class="ic or"><use href="#i-tri"/></svg><span>Bag Decorate.002</span><svg class="ic dim g1"><use href="#i-dots"/></svg><svg class="ic gr cut"><use href="#i-curve"/></svg><span class="rs"><svg class="ic"><use href="#i-eye"/></svg><svg class="ic"><use href="#i-cam"/></svg></span></li>
        <li class="kid act"><i class="tw"></i><svg class="ic or hl"><use href="#i-tri"/></svg><span>Bag1.002</span><svg class="ic gr g1"><use href="#i-mesh"/></svg><span class="rs"><svg class="ic"><use href="#i-eye"/></svg><svg class="ic"><use href="#i-cam"/></svg></span></li>
        <li class="kid"><i class="tw"></i><svg class="ic or"><use href="#i-tri"/></svg><span>Bag2.002</span><svg class="ic gr g1"><use href="#i-mesh"/></svg><span class="rs"><svg class="ic"><use href="#i-eye"/></svg><svg class="ic"><use href="#i-cam"/></svg></span></li>
        <li class="kid"><i class="tw"></i><svg class="ic or"><use href="#i-tri"/></svg><span>Strap2</span><svg class="ic gr g1"><use href="#i-mesh"/></svg><span class="rs"><svg class="ic"><use href="#i-eye"/></svg><svg class="ic"><use href="#i-cam"/></svg></span></li>
        <li class="mute"><i class="tw"></i><svg class="ic"><use href="#i-coll"/></svg><span>bag3</span><svg class="ic or g1"><use href="#i-tri"/></svg><b>5</b><span class="rs"><input type="checkbox" checked aria-label="Include bag3"><svg class="ic"><use href="#i-closed"/></svg><svg class="ic"><use href="#i-camx"/></svg></span></li>
        <li class="mute"><i class="tw"></i><svg class="ic"><use href="#i-coll"/></svg><span>light</span><svg class="ic or g1"><use href="#i-tri"/></svg><svg class="ic or"><use href="#i-bulb"/></svg><b>4</b><span class="rs"><input type="checkbox" checked aria-label="Include light"><svg class="ic"><use href="#i-closed"/></svg><svg class="ic"><use href="#i-camx"/></svg></span></li>
        <li class="mute lit"><i class="tw"></i><svg class="ic or"><use href="#i-movie"/></svg><span>Camera</span><svg class="ic gr hl g1"><use href="#i-movieline"/></svg><span class="rs"><svg class="ic"><use href="#i-closed"/></svg><svg class="ic"><use href="#i-camx"/></svg></span></li>
      </ul>
      <div class="hscroll"></div>
    </section>

    <section class="editor props" aria-label="Properties">
      <header class="bar">
        <button class="box ed" aria-label="Editor type"><svg class="ic"><use href="#i-props"/></svg><i class="dn"></i></button>
        <label class="search"><svg class="ic"><use href="#i-search"/></svg><input aria-label="Search properties"></label>
        <button class="box ed new" aria-label="Options"><i class="dn"></i></button>
      </header>
      <div class="pbody">
        <nav class="ptabs">
          <button aria-label="Tool"><svg class="ic"><use href="#i-tools"/></svg></button>
          <button class="cur sep" aria-label="Render"><svg class="ic"><use href="#i-render"/></svg></button>
          <button aria-label="Output"><svg class="ic"><use href="#i-output"/></svg></button>
          <button aria-label="View layer"><svg class="ic"><use href="#i-layers"/></svg></button>
          <button aria-label="Scene"><svg class="ic"><use href="#i-scene"/></svg></button>
          <button class="red" aria-label="World"><svg class="ic"><use href="#i-world"/></svg></button>
          <button class="orange sep" aria-label="Object"><svg class="ic"><use href="#i-object"/></svg></button>
          <button class="azure" aria-label="Modifiers"><svg class="ic"><use href="#i-wrench"/></svg></button>
          <button class="azure" aria-label="Particles"><svg class="ic"><use href="#i-particles"/></svg></button>
          <button class="azure" aria-label="Physics"><svg class="ic"><use href="#i-physics"/></svg></button>
          <button class="azure" aria-label="Constraints"><svg class="ic"><use href="#i-constraint"/></svg></button>
          <button class="green" aria-label="Data"><svg class="ic"><use href="#i-mesh"/></svg></button>
          <button class="red" aria-label="Material"><svg class="ic"><use href="#i-material"/></svg></button>
          <button class="red sep" aria-label="Texture"><svg class="ic"><use href="#i-texture"/></svg></button>
        </nav>
        <div class="panels">
          <section class="pp"><h2><i class="rt"></i>Curves<i class="grip"></i></h2></section>
          <section class="pp"><h2><i class="rt"></i><label class="chk"><input type="checkbox">Simplify</label><i class="grip"></i></h2></section>
          <section class="pp"><h2><i class="rt"></i><label class="chk"><input type="checkbox">Motion Blur</label><i class="grip"></i></h2></section>
          <section class="pp">
            <h2><i class="dn"></i>Film<i class="grip"></i></h2>
            <div class="prow expo"><label for="expo">Exposure</label><input id="expo" class="num" value="1.00"></div>
            <h3><i class="dn"></i>Pixel Filter</h3>
            <div class="deep">
              <div class="prow"><label for="ptype">Type</label><span class="sel big"><select id="ptype"><option>Blackman-Harris</option></select></span></div>
              <div class="prow"><label for="pwid">Width</label><input id="pwid" class="num" value="1.50 px"></div>
            </div>
            <h3><i class="dn"></i><label class="chk"><input type="checkbox">Transparent</label></h3>
            <div class="deep off">
              <div class="prow"><span></span><label class="chk"><input type="checkbox" disabled>Transparent Glass</label></div>
              <div class="prow"><label for="rough">Roughness Thre...</label><input id="rough" class="num" value="0.10" disabled></div>
            </div>
          </section>
          <section class="pp"><h2><i class="rt"></i>Performance<svg class="ic lst"><use href="#i-list"/></svg><i class="grip"></i></h2></section>
          <section class="pp"><h2><i class="rt"></i>Bake<i class="grip"></i></h2></section>
          <section class="pp"><h2><i class="rt"></i>Grease Pencil<i class="grip"></i></h2></section>
          <section class="pp"><h2><i class="rt"></i><label class="chk"><input type="checkbox">Freestyle</label><i class="grip"></i></h2></section>
          <section class="pp">
            <h2><i class="dn"></i>Color Management<i class="grip"></i></h2>
            <div class="prow disp"><label for="dev">Display Device</label><span class="sel big"><select id="dev"><option>sRGB</option></select></span></div>
            <div class="cm">
              <div class="prow"><label for="vt">View Transform</label><span class="sel big"><select id="vt"><option>Filmic</option></select></span></div>
              <div class="prow"><label for="look">Look</label><span class="sel big"><select id="look"><option>Medium High Cont...</option></select></span></div>
              <div class="prow"><label for="exp2">Exposure</label><input id="exp2" class="num half" value="0.000"></div>
            </div>
          </section>
        </div>
      </div>
    </section>
  </div>
</main>
</body>
</html>
```
FILE: styles.css
```css
:root {
  --txt: #e3e3e3;
  --dim: #b4b4b4;
  --blue: #4772b3;
  --field: #545454;
  --dark: #282828;
  --line: #3d3d3d;
}
* { box-sizing: border-box; margin: 0; padding: 0; }
body {
  background: #161616;
  color: var(--txt);
  font: 28px/38px Inter, "Liberation Sans", sans-serif;
  overflow: hidden;
}
button, input, select {
  font: inherit; color: inherit; background: none; border: 0; outline: 0;
  appearance: none; min-width: 0; border-radius: 0;
}
button { white-space: nowrap; }
h2, h3, th, b { font-weight: 400; }
ul { list-style: none; }
.sprite { position: absolute; width: 0; height: 0; }
.ic { width: 30px; height: 30px; flex: none; }
.ic.dim { color: #a8a8a8; }

.workspace {
  display: grid;
  grid-template-columns: 1309fr 1853fr 628fr;
  gap: 8px;
  height: 100vh;
}
.editor { border-radius: 10px 10px 0 0; overflow: hidden; position: relative; }

/* chevrons */
.dn, .rt { flex: none; width: 9px; height: 9px; border: solid #ccc; border-width: 0 2px 2px 0; transform: translateY(-3px) rotate(45deg); }
.rt { transform: rotate(-45deg); }
.grip {
  flex: none; width: 21px; height: 8px; margin-left: auto;
  background: radial-gradient(circle, #8c8c8c 1px, transparent 2px) 0 0 / 5px 4px;
}

/* header bars */
.bar { display: flex; align-items: center; gap: 12px; height: 49px; padding: 0 17px; white-space: nowrap; }
.box {
  display: flex; align-items: center; gap: 12px; flex: none; height: 40px;
  border: 2px solid var(--line); border-radius: 8px; background: var(--dark);
}
.box > .dn:last-child, .ed > .dn { margin-left: auto; margin-right: 8px; }
.ed { display: flex; align-items: center; width: 63px; padding-left: 6px; gap: 4px; }
.ed > .dn { margin-right: 5px; }
.menu { display: flex; margin-left: -1px; }
.menu button { padding: 0 17px; color: #d5d5d5; }
.chk { display: flex; align-items: center; gap: 10px; white-space: nowrap; }
input[type=checkbox] { flex: none; width: 26px; height: 26px; border-radius: 4px; background: var(--field); display: grid; place-items: center; }
input[type=checkbox]:checked { background: var(--blue); }
input[type=checkbox]:checked::after { content: ""; width: 7px; height: 13px; border: solid #fff; border-width: 0 3px 3px 0; transform: translateY(-2px) rotate(42deg); }
.seg { gap: 1px; padding: 0; overflow: hidden; }
.seg button { display: flex; align-items: center; justify-content: center; gap: 8px; width: 38px; height: 100%; }
.seg .wide { width: 62px; }
.seg .on { background: #4f4f4f; }
.blue { background: var(--blue) !important; }
.faint { color: #8a8a8a; }
.faint .wide { opacity: .5; }
.push { margin-left: auto; }
.search { display: flex; align-items: center; flex: 1; min-width: 0; height: 40px; padding-left: 7px; border: 2px solid var(--line); border-radius: 8px; background: #1d1d1d; }
.search input { flex: 1; height: 100%; }

/* node editor */
.nodes { background: #1d1d1d; }
.nodes .bar { position: relative; z-index: 2; margin-top: 2px; height: 47px; padding-right: 0; }
.obj { width: 212px; padding-left: 7px; }
.slot { width: 162px; padding-left: 14px; margin-left: 50px; }
.mat { width: 300px; gap: 0; }
.mat .ed { height: 100%; border-right: 2px solid var(--line); }
.mat input { padding-left: 14px; flex: 1; height: 100%; background: #1d1d1d; }
.crumbs { display: flex; align-items: center; gap: 18px; height: 96px; position: relative; z-index: 2; font-size: 29px; }
.crumbs .ic { margin-left: 2px; }
.crumbs .rt { width: 14px; height: 14px; }
.crumbs .edge { margin-left: -5px; margin-right: 7px; }
.crumbs span { margin-right: 2px; }
.crumbs .lt { margin-left: auto; margin-right: -2px; transform: rotate(135deg); }
.scrollbar { position: absolute; right: 4px; top: 72px; bottom: 24px; width: 7px; border-radius: 4px; background: #333; }
.canvas { position: absolute; inset: 0; width: 100%; height: 100%; }

.node { position: absolute; width: 199px; padding-bottom: 2px; border-radius: 3px; background: #303030; font-size: 11px; line-height: 14px; box-shadow: 0 1px 5px 1px #0c0c0c; }
.node h3 { display: flex; align-items: center; gap: 7px; height: 17px; padding-left: 10px; margin-bottom: 2px; border-radius: 3px 3px 0 0; font-size: 10px; white-space: nowrap; }
.node .dn, .node .rt { width: 5px; height: 5px; border-width: 0 1px 1px 0; transform: translateY(-1px) rotate(45deg); }
.node .rt { transform: rotate(-45deg); }
.h-tex { background: #79461d; }
.h-vec { background: #3c3c83; }
.h-shd { background: #2b652b; }
.h-out { background: #3f1d27; }
.node.active { outline: 1px solid #fff; }
.out, .in { position: relative; height: 19px; line-height: 19px; font-size: 10px; padding: 0 11px; }
.out { text-align: right; }
.out.last { margin-bottom: 4px; }
.out::after, .in::after { content: ""; position: absolute; top: 5px; right: -5px; width: 9px; height: 9px; border-radius: 50%; border: 1px solid #161616; background: #a1a1a1; }
.in::after { right: auto; left: -5px; }
.y::after { background: #c7c745; }
.p::after { background: #6363b8; }
.s::after { background: #63c763; }
.f { display: flex; align-items: center; height: 21px; padding: 0 9px; }
.f.two { font-size: 10px; padding-left: 10px; }
.f.low { height: 19px; }
.f.two .sel { flex: none; width: 118px; margin-left: auto; font-size: 11px; }
.sel { display: grid; flex: 1; min-width: 0; height: 15px; border: 1px solid var(--line); border-radius: 2px; background: var(--dark); }
.sel > select, .sel::after { grid-area: 1 / 1; }
.sel > select { width: 100%; padding: 0 5px; line-height: 13px; }
.sel::after { content: ""; pointer-events: none; align-self: center; justify-self: end; width: 4px; height: 4px; margin: 0 5px 3px 0; border: solid #ccc; border-width: 0 1px 1px 0; transform: rotate(45deg); }
.off { color: #7b7b7b; }
.off .sel { opacity: .7; }
.off .sel::after { border-color: #555; }
select:disabled, input:disabled { color: #7b7b7b; opacity: 1; }
.idb { gap: 1px; }
.idb button { display: flex; align-items: center; justify-content: center; gap: 4px; width: 16px; height: 13px; background: #484848; }
.idb button:first-child { width: 25px; background: var(--dark); }
.idb svg { width: 12px; height: 12px; }
.idb input { flex: 1; height: 13px; padding-left: 5px; background: #1d1d1d; }
.uv { width: 100%; height: 15px; padding-left: 5px; border: 1px solid var(--line); background: #1d1d1d; }
.in .val { display: flex; height: 15px; line-height: 15px; margin: 0 -2px; padding: 0 11px; background: var(--field); border-radius: 2px; font-size: 11px; position: relative; top: 2px; }
.val input { flex: 1; width: 20px; text-align: right; }
.in .val.full { background: var(--blue); }
.sub { display: flex; align-items: center; gap: 8px; height: 17px; padding-left: 9px; }
.n-base { left: 168px; top: 296px; }
.n-metal { left: 184px; top: 617px; }
.n-rough { left: 186px; top: 907px; }
.n-norm { left: 172px; top: 1177px; }
.n-height { left: 623px; top: 1157px; }
.n-nmap { left: 440px; top: 1030px; width: 124px; }
.n-bsdf { left: 632px; top: 853px; }
.n-disp { left: 890px; top: 967px; width: 116px; }
.n-out { left: 1074px; top: 853px; width: 116px; }
.n-out h3 { margin-bottom: 0; }

/* viewport */
.view3d { display: flex; flex-direction: column; background: #393939; }
.scene { position: absolute; inset: 0; width: 100%; height: 100%; }
.heads { position: relative; background: #303030; height: 104px; flex: none; }
.heads .bar { padding-right: 15px; height: 51px; }
.heads .menu { margin-right: 17px; }
.mode { width: 221px; padding-left: 7px; }
.global { width: 161px; padding-left: 6px; }
.heads .lab { font-size: 25px; color: var(--dim); }
.orient { width: 201px; padding-left: 5px; }
.drag { margin-left: 24px; }
.drag + .box { margin-left: 7px; }
.dragbox { width: 179px; padding-left: 13px; }
.heads .tools { padding-right: 0; }
.gem { display: flex; align-items: center; gap: 10px; margin-left: 24px; }
.gem .dn { width: 12px; height: 12px; }
.gem span { width: 27px; height: 30px; background: conic-gradient(from 20deg, #d8a020, #e8503a 30%, #c0502a 45%, #3ab05a 55%, #18a8c8 75%, #18b8b8); clip-path: polygon(50% 0, 100% 25%, 100% 75%, 50% 100%, 0 75%, 0 25%); }
.tools .search { margin: 0 -8px; }
.opts { width: 70px; margin-left: 22px; padding-left: 13px; border-right: 0; border-radius: 8px 0 0 8px; }

.stage { position: relative; display: flex; flex: 1; min-height: 0; overflow: hidden; }
.toolbar { width: 77px; margin: 17px 0 0 15px; display: flex; flex-direction: column; gap: 14px; }
.tg { display: flex; flex-direction: column; gap: 1px; border-radius: 8px; overflow: hidden; background: #444; box-shadow: 0 0 0 2px var(--line); }
.tg button { display: grid; place-items: center; height: 69px; background: var(--dark); }
.tg svg { width: 48px; height: 46px; }
.tg .more { background: linear-gradient(135deg, transparent 50%, #999 50%) right 4px bottom 5px / 8px 8px no-repeat var(--dark); }
.stats { margin: 16px 0 0 38px; font-size: 25px; color: #fff; text-shadow: 0 1px 3px #000; white-space: nowrap; }
.stats table { margin-top: 24px; border-spacing: 0; }
.stats th { width: 128px; text-align: left; }
.nav { display: flex; flex-direction: column; align-items: flex-end; gap: 5px; margin: 18px 34px 0 auto; }
.gizmo { width: 168px; height: 163px; }
.nav button { display: grid; place-items: center; width: 56px; height: 56px; border-radius: 50%; background: #272727; }
.nav button svg { width: 32px; height: 32px; }

.npanel { width: 373px; padding-top: 4px; display: flex; flex-direction: column; gap: 4px; }
.pn { background: #3d3d3d; border-radius: 6px; overflow: hidden; flex: none; }
.pn h2, .pp h2 { display: flex; align-items: center; height: 51px; font-size: 32px; color: #f2f2f2; }
.pn h2 { height: 52px; padding: 0 14px 0 19px; gap: 15px; }
.pn h2 .dn, .pp h2 .dn, .pn h3 .dn, .pp h3 .dn, .pn h2 .rt, .pp h2 .rt { width: 12px; height: 12px; border-color: #b0b0b0; }
.rows { padding-right: 18px; }
.first { padding-top: 17px; padding-bottom: 19px; }
.row { display: grid; grid-template-columns: 143px 1fr; column-gap: 20px; align-items: center; height: 37px; }
.row > span { text-align: right; font-size: 25px; color: #d0d0d0; white-space: nowrap; }
.row .chk, .row .inl { gap: 10px; }
.num { width: 100%; height: 37px; border-radius: 5px; background: var(--field); text-align: center; }
.pair { display: grid; gap: 2px; margin-top: 8px; }
.pair .row:first-child .num { border-radius: 5px 5px 0 0; }
.pair .row:last-child .num { border-radius: 0 0 5px 5px; }
.gapped { margin-top: 37px; }
.inl { display: flex; align-items: center; }
.pick { display: flex; align-items: center; justify-content: space-between; flex: 1; height: 37px; padding: 0 8px; border-radius: 5px; background: #1d1d1d; }
.inl .pick { margin-left: 6px; background: #2c2c2c; }
.ic.sm { width: 22px; height: 22px; }
.pn h3 { display: flex; align-items: center; gap: 16px; height: 50px; padding-left: 47px; font-size: 25px; }
.deep { background: #353535; }
.rows.deep { padding-top: 18px; padding-bottom: 18px; }
.lock { margin-top: 13px; }
.cam { margin-top: 5px; }
.vecs { padding: 17px 18px 18px; }
.vecs p { font-size: 25px; color: #d0d0d0; line-height: 37px; margin-bottom: 4px; }
.vecs .rot { margin-top: 14px; }
.vec { display: grid; grid-template-columns: minmax(0, 1fr); gap: 2px; border-radius: 6px; overflow: hidden; }
.vec label { display: flex; align-items: center; height: 38px; padding: 0 30px 0 31px; background: var(--field); }
.vec input { flex: 1; width: 0; text-align: right; }
.sel.big { height: 37px; border-color: #2a2a2a; border-radius: 6px; }
.sel.big > select { padding: 0 13px; line-height: 33px; }
.sel.big::after { width: 9px; height: 9px; margin: 0 8px 4px 0; border-width: 0 2px 2px 0; }
.euler { margin-top: 15px; }

.tabs { width: 40px; margin-left: 16px; padding-top: 9px; background: #181818; display: flex; flex-direction: column; gap: 9px; }
.tabs button { flex: none; writing-mode: vertical-rl; width: 38px; padding: 15px 0; border: 2px solid var(--line); border-left: 0; border-radius: 0 8px 8px 0; background: #1d1d1d; line-height: 34px; color: #ccc; }
.tabs .cur { background: #303030; color: #fff; }

/* outliner */
.side { display: flex; flex-direction: column; gap: 8px; min-width: 0; min-height: 0; }
.outliner { background: #282828; height: 611px; flex: none; border-radius: 10px; }
.side .bar { padding: 0 0 0 15px; gap: 11px; }
.side .search { flex: 0 0 281px; margin: 0 52px 0 22px; }
.side .new { width: 22px; border-right: 0; border-radius: 8px 0 0 8px; overflow: hidden; padding-left: 6px; flex: 1; }
.side .lift { background: #4f4f4f; }
.tree { padding-top: 4px; height: 540px; background: repeating-linear-gradient(#282828 0 41px, #2b2b2b 41px 82px) 0 4px; position: relative; }
.tree::before { content: ""; position: absolute; left: 57px; top: 136px; width: 2px; height: 144px; background: #555; z-index: 1; }
.tree li { display: flex; align-items: center; height: 41px; padding-left: 52px; color: #e0e0e0; }
.tree .root { padding-left: 41px; gap: 10px; color: #ccc; }
.tree .kid { padding-left: 93px; color: #ccc; }
.tree span { white-space: nowrap; }
.tree .tw { width: 0; height: 0; border: solid transparent; border-width: 6px 0 6px 12px; border-left-color: #ddd; margin-right: 22px; }
.tree .tw.open { border-width: 12px 6px 0; border-color: #ddd transparent transparent; }
.tree li > .ic { margin-right: 14px; }
.tree li > .hl { width: 40px; height: 36px; padding: 3px 5px; margin: 0 9px 0 -5px; border-radius: 8px; background: #5e5e5e; box-shadow: 0 0 0 1px #777; }
.tree .root > .hl { margin: 0; }
.tree .act { background: #334d80; }
.tree .act > span:not(.rs) { color: #f5b04f; }
.tree .act > .hl { background: #6a7596; }
.or { color: #c98347; }
.gr { color: #1fae84; }
.tree li > .ic.g1 { margin-left: 51px; margin-right: 8px; }
.tree li > .hl.g1 { margin-left: 43px; }
.mute .ic + b { font-size: 22px; margin: 12px 0 0 -12px; color: #ccc; }
.tree .mute { color: #7a7a7a; }
.mute .or { color: #85583a; }
.mute .gr { color: #35a380; }
.tree .mute > .hl { background: #555b59; }
.mute > .tw { border-left-color: #8a8a8a; }
.tree .cut { width: 16px; height: 30px; }
.rs { margin-left: auto; display: flex; align-items: center; gap: 12px; width: 100px; flex: none; overflow: hidden; }
.tree .rs > svg:first-child { margin-left: 36px; }
.rs input[type=checkbox] { width: 21px; height: 21px; margin-right: 3px; border-radius: 2px; background: #e6e6e6; }
.rs input[type=checkbox]:checked::after { width: 5px; height: 10px; border-color: #222; }
.mute .rs { color: #666; }
.mute.lit .rs { color: #bbb; }
.hscroll { height: 6px; margin: 8px 5px 0 16px; border-radius: 3px; background: #3a3a3a; }

/* properties */
.props { flex: 1; min-height: 0; background: #303030; display: flex; flex-direction: column; }
.props .bar { height: 50px; flex: none; }
.props .search { margin: 0 122px 0 103px; }
.pbody { display: flex; flex: 1; min-height: 0; }
.ptabs { width: 55px; flex: none; padding-top: 17px; background: #1d1d1d; display: flex; flex-direction: column; }
.ptabs button { display: grid; place-items: center; height: 53px; margin-bottom: 4px; color: #b9b9b9; flex: none; }
.ptabs .cur { background: #303030; border-radius: 6px 0 0 6px; color: #e0e0e0; margin-left: 2px; }
.ptabs .sep { margin-top: 16px; }
.ptabs .red { color: #b2555d; }
.ptabs .orange { color: #c98347; }
.ptabs .azure { color: #6285cc; }
.ptabs .green { color: #1fae84; }
.panels { flex: 1; min-width: 0; margin-left: 16px; padding-top: 6px; display: flex; flex-direction: column; gap: 4px; }
.pp { flex: none; background: #3d3d3d; border-radius: 6px 0 0 6px; overflow: hidden; color: #eee; }
.pp h2 { padding: 0 0 0 19px; gap: 15px; }
.pp h2 .chk { gap: 9px; margin-left: -3px; }
.lst { margin-left: auto; margin-right: 7px; }
.lst + .grip { margin-left: 0; }
.pp .grip { width: 18px; }
.pp h3 { display: flex; align-items: center; gap: 14px; height: 50px; padding-left: 47px; font-size: 25px; }
.pp h3 .chk { gap: 8px; }
.prow { display: grid; grid-template-columns: 223px 1fr; column-gap: 20px; align-items: center; height: 37px; }
.prow > label:first-child { text-align: right; font-size: 25px; white-space: nowrap; }
.prow .num { border-radius: 6px; }
.expo { margin: 18px 0; }
.pp .deep { padding: 18px 0; display: grid; gap: 8px; }
.deep.off .num, .deep.off input { background: #444; }
.disp { margin: 18px 0 24px; }
.cm { display: grid; gap: 8px; padding-bottom: 18px; }
.half { background: linear-gradient(90deg, var(--blue) 50%, var(--field) 50%); }
```
